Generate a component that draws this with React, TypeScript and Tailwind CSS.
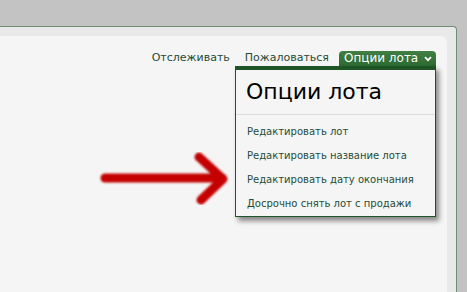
import React from "react";

export default function App() {
  const items = [
    "Редактировать лот",
    "Редактировать название лота",
    "Редактировать дату окончания",
    "Досрочно снять лот с продажи",
  ];
  return (
    <div
      className="relative h-[292px] w-[467px] overflow-hidden bg-[#c3c3c3] pt-[26px]"
      style={{ fontFamily: '"DejaVu Sans", Verdana, sans-serif' }}
    >
      <div className="h-[266px] w-[457px] rounded-tr-[4px] border-t border-r border-[#6f8f74] bg-[#e9e9e9] pt-[9px] pr-[9px]">
        <div className="h-full rounded-tr-[6px] bg-[#f5f5f5] pt-[14px] pr-[11px]">
          <div className="flex items-end justify-end text-[11px] leading-[16px]">
            <span className="mr-[15px] text-[#1f4c38]">Отслеживать</span>
            <span className="mr-[10px] text-[#1f4c38]">Пожаловаться</span>
            <div className="relative">
              <div className="flex h-[15px] w-[97px] items-center rounded-t-[4px] bg-gradient-to-b from-[#417f44] to-[#2b6a31] pl-[5px] text-[12px] text-white">
                <span className="leading-[15px]">Опции лота</span>
                <svg width="8" height="6" viewBox="0 0 8 6" className="ml-[6px] mt-[1px]">
                  <path d="M1 1.2 L4 4.2 L7 1.2" fill="none" stroke="white" strokeWidth="1.8" />
                </svg>
              </div>
              <div className="absolute right-0 top-[15px] z-10 w-[201px] border-t-[4px] border-x border-b border-[#1f5526] bg-[#f5f5f5] shadow-[3px_4px_5px_rgba(0,0,0,0.45)]">
                <div className="px-[10px] pt-[10px] pb-[10px] text-[22px] leading-[24px] text-black">
                  Опции лота
                </div>
                <div className="h-px bg-[#dcdcdc]" />
                <div className="flex flex-col gap-[8px] px-[11px] pt-[9px] pb-[4px] text-[10px] leading-[16px] text-[#1f4c38]">
                  {items.map((t) => (
                    <div key={t}>{t}</div>
                  ))}
                </div>
              </div>
            </div>
          </div>
        </div>
      </div>
      <svg
        className="pointer-events-none absolute left-0 top-0"
        width="467"
        height="292"
        viewBox="0 0 467 292"
      >
        <defs>
          <filter id="blur" x="-10%" y="-10%" width="120%" height="120%">
            <feGaussianBlur stdDeviation="1.2" />
          </filter>
        </defs>
        <g
          filter="url(#blur)"
          stroke="#c40000"
          strokeWidth="9"
          strokeLinecap="round"
          strokeLinejoin="round"
          fill="none"
        >
          <path d="M105 178 L222 178" />
          <path d="M199 157 L223 179 L201 200" />
        </g>
      </svg>
    </div>
  );
}
